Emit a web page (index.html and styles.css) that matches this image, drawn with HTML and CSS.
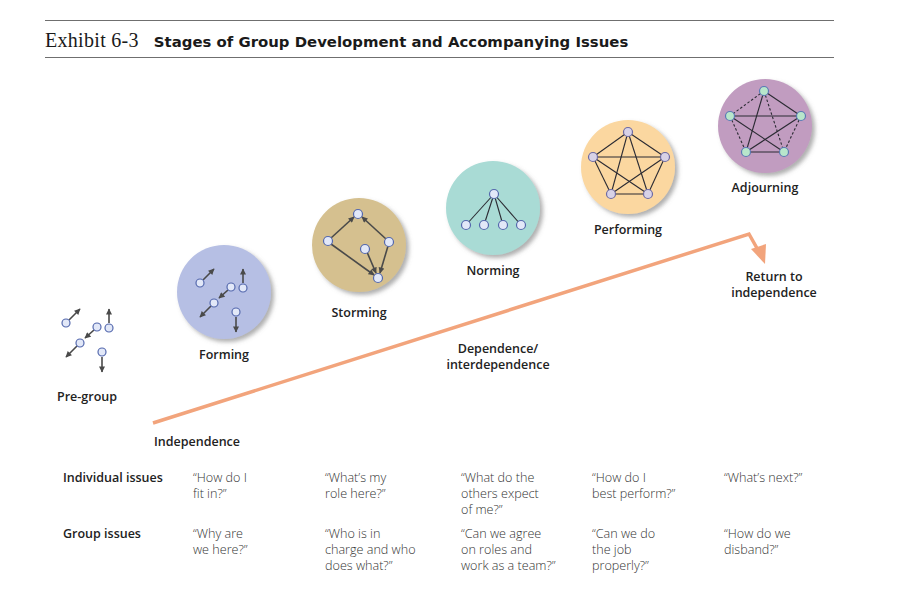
FILE: index.html
```html
<!DOCTYPE html>
<html lang="en">
<head>
<meta charset="utf-8">
<title>Exhibit 6-3 Stages of Group Development</title>
<link rel="stylesheet" href="styles.css">
</head>
<body>
<div class="page">
  <header class="exhibit-head">
    <span class="exhibit-num">Exhibit 6-3</span>
    <span class="exhibit-title">Stages of Group Development and Accompanying Issues</span>
  </header>

  <div class="diagram">
    <svg class="diagram-svg" width="897" height="404" viewBox="0 58 897 404" xmlns="http://www.w3.org/2000/svg">
      <defs>
        <marker id="ah" viewBox="0 0 10 10" refX="9" refY="5" markerWidth="7" markerHeight="6" markerUnits="userSpaceOnUse" orient="auto">
          <path d="M0,0 L10,5 L0,10 z" fill="#4a4a4a"/>
        </marker>
        <filter id="sh" x="-20%" y="-20%" width="150%" height="150%">
          <feDropShadow dx="3" dy="3" stdDeviation="2" flood-color="#6e6e6e" flood-opacity="0.55"/>
        </filter>
        <g id="scatter">
          <line class="arr" x1="69" y1="320" x2="80" y2="309" marker-end="url(#ah)"/>
          <line class="arr" x1="94" y1="330" x2="85" y2="338" marker-end="url(#ah)"/>
          <line class="arr" x1="77" y1="346" x2="66" y2="357" marker-end="url(#ah)"/>
          <line class="arr" x1="109" y1="323" x2="109" y2="309" marker-end="url(#ah)"/>
          <line class="arr" x1="102" y1="357" x2="102" y2="372" marker-end="url(#ah)"/>
          <circle class="nd" cx="66" cy="323" r="4"/>
          <circle class="nd" cx="97" cy="327" r="4"/>
          <circle class="nd" cx="80" cy="343" r="4"/>
          <circle class="nd" cx="109" cy="328" r="4"/>
          <circle class="nd" cx="102" cy="352" r="4"/>
        </g>
      </defs>

      <!-- orange development line -->
      <polyline class="trend" points="153,423 749,234 758,250"/>
      <polygon class="trend-head" points="751,249 766,244 765,264"/>

      <!-- Pre-group -->
      <use href="#scatter" class="pre"/>

      <!-- Forming -->
      <circle class="disc forming" cx="224" cy="292" r="47"/>
      <use href="#scatter" transform="translate(134,-40)"/>

      <!-- Storming -->
      <circle class="disc storming" cx="359" cy="245" r="47"/>
      <line class="arr" x1="331" y1="238" x2="354" y2="217" marker-end="url(#ah)"/>
      <line class="arr" x1="386" y1="239" x2="362" y2="217" marker-end="url(#ah)"/>
      <line class="arr" x1="331" y1="244" x2="374" y2="275" marker-end="url(#ah)"/>
      <line class="arr" x1="367" y1="252" x2="376" y2="273" marker-end="url(#ah)"/>
      <line class="arr" x1="388" y1="246" x2="380" y2="273" marker-end="url(#ah)"/>
      <circle class="nd" cx="358" cy="214" r="4.5"/>
      <circle class="nd" cx="328" cy="241" r="4.5"/>
      <circle class="nd" cx="389" cy="242" r="4.5"/>
      <circle class="nd" cx="365" cy="249" r="4.5"/>
      <circle class="nd" cx="378" cy="278" r="4.5"/>

      <!-- Norming -->
      <circle class="disc norming" cx="493" cy="208" r="47"/>
      <line class="edge" x1="494" y1="194" x2="466" y2="225"/>
      <line class="edge" x1="494" y1="194" x2="484" y2="225"/>
      <line class="edge" x1="494" y1="194" x2="503" y2="225"/>
      <line class="edge" x1="494" y1="194" x2="521" y2="225"/>
      <circle class="nd" cx="494" cy="194" r="4.5"/>
      <circle class="nd" cx="466" cy="225" r="4.5"/>
      <circle class="nd" cx="484" cy="225" r="4.5"/>
      <circle class="nd" cx="503" cy="225" r="4.5"/>
      <circle class="nd" cx="521" cy="225" r="4.5"/>

      <!-- Performing -->
      <circle class="disc performing" cx="628" cy="167" r="47"/>
      <g class="edge">
        <line x1="628" y1="132" x2="593" y2="157"/>
        <line x1="628" y1="132" x2="665" y2="157"/>
        <line x1="628" y1="132" x2="611" y2="194"/>
        <line x1="628" y1="132" x2="648" y2="194"/>
        <line x1="593" y1="157" x2="665" y2="157"/>
        <line x1="593" y1="157" x2="611" y2="194"/>
        <line x1="593" y1="157" x2="648" y2="194"/>
        <line x1="665" y1="157" x2="611" y2="194"/>
        <line x1="665" y1="157" x2="648" y2="194"/>
        <line x1="611" y1="194" x2="648" y2="194"/>
      </g>
      <circle class="nd nd-lav" cx="628" cy="132" r="4.5"/>
      <circle class="nd nd-lav" cx="593" cy="157" r="4.5"/>
      <circle class="nd nd-lav" cx="665" cy="157" r="4.5"/>
      <circle class="nd nd-lav" cx="611" cy="194" r="4.5"/>
      <circle class="nd nd-lav" cx="648" cy="194" r="4.5"/>

      <!-- Adjourning -->
      <circle class="disc adjourning" cx="765" cy="126" r="47"/>
      <g class="edge">
        <line x1="764" y1="91" x2="801" y2="116"/>
        <line x1="764" y1="91" x2="746" y2="152"/>
        <line x1="730" y1="116" x2="801" y2="116"/>
        <line x1="730" y1="116" x2="784" y2="152"/>
        <line x1="801" y1="116" x2="746" y2="152"/>
        <line x1="746" y1="152" x2="784" y2="152"/>
      </g>
      <g class="edge dashed">
        <line x1="764" y1="91" x2="730" y2="116"/>
        <line x1="764" y1="91" x2="784" y2="152"/>
        <line x1="730" y1="116" x2="746" y2="152"/>
        <line x1="801" y1="116" x2="784" y2="152"/>
      </g>
      <circle class="nd nd-green" cx="764" cy="91" r="4.5"/>
      <circle class="nd nd-green" cx="730" cy="116" r="4.5"/>
      <circle class="nd nd-green" cx="801" cy="116" r="4.5"/>
      <circle class="nd nd-green" cx="746" cy="152" r="4.5"/>
      <circle class="nd nd-green" cx="784" cy="152" r="4.5"/>

      <!-- Labels -->
      <text class="lbl" x="87" y="401">Pre-group</text>
      <text class="lbl" x="224" y="359">Forming</text>
      <text class="lbl" x="359" y="317">Storming</text>
      <text class="lbl" x="493" y="275">Norming</text>
      <text class="lbl" x="628" y="234">Performing</text>
      <text class="lbl" x="765" y="192">Adjourning</text>
      <text class="lbl" x="197" y="446">Independence</text>
      <text class="lbl" x="498" y="353">Dependence/</text>
      <text class="lbl" x="498" y="369">interdependence</text>
      <text class="lbl" x="774" y="281">Return to</text>
      <text class="lbl" x="774" y="297">independence</text>
    </svg>
  </div>

  <div class="issues">
    <div class="issue-head">Individual issues</div>
    <div class="quote">“How do I<br>fit in?”</div>
    <div class="quote">“What’s my<br>role here?”</div>
    <div class="quote">“What do the<br>others expect<br>of me?”</div>
    <div class="quote">“How do I<br>best perform?”</div>
    <div class="quote">“What’s next?”</div>

    <div class="issue-head">Group issues</div>
    <div class="quote">“Why are<br>we here?”</div>
    <div class="quote">“Who is in<br>charge and who<br>does what?”</div>
    <div class="quote">“Can we agree<br>on roles and<br>work as a team?”</div>
    <div class="quote">“Can we do<br>the job<br>properly?”</div>
    <div class="quote">“How do we<br>disband?”</div>
  </div>
</div>
</body>
</html>
```

FILE: styles.css
```css
html, body {
  margin: 0;
  padding: 0;
  background: #ffffff;
}

.page {
  width: 897px;
  height: 592px;
  overflow: hidden;
  font-family: "Open Sans", "Liberation Sans", sans-serif;
  color: #222;
}

.exhibit-head {
  margin: 20px 0 0 45px;
  width: 789px;
  height: 38px;
  box-sizing: border-box;
  border-top: 1px solid #6f6f6f;
  border-bottom: 1px solid #6f6f6f;
  display: flex;
  align-items: baseline;
  gap: 15px;
  padding-top: 8px;
}

.exhibit-num {
  font-family: "Liberation Serif", "DejaVu Serif", serif;
  font-size: 20px;
  color: #1a1a1a;
  letter-spacing: 0.3px;
}

.exhibit-title {
  font-family: "DejaVu Sans", "Liberation Sans", sans-serif;
  font-weight: bold;
  font-size: 14.9px;
  color: #1a1a1a;
}

.diagram {
  height: 404px;
}

.diagram-svg {
  display: block;
}

.disc {
  filter: url(#sh);
}
.forming { fill: #b6bfe4; }
.storming { fill: #d5c08f; }
.norming { fill: #a9dbd5; }
.performing { fill: #fbd7a0; }
.adjourning { fill: #c19cc0; }

.nd {
  fill: #e2e8f8;
  stroke: #5468ad;
  stroke-width: 1.2;
}
.pre .nd { fill: #ffffff; }
.nd-lav {
  fill: #d8d2e7;
  stroke: #6d6aa3;
}
.nd-green {
  fill: #b8e6cb;
  stroke: #5a79b5;
}

.arr {
  stroke: #4a4a4a;
  stroke-width: 1.6;
}

.edge, .edge line {
  stroke: #2b2b33;
  stroke-width: 1.1;
}
.dashed line {
  stroke-dasharray: 2.5 2;
}

.trend {
  fill: none;
  stroke: #f2a47c;
  stroke-width: 3.5;
  stroke-linejoin: miter;
}
.trend-head {
  fill: #f2a47c;
}

.lbl {
  font-family: "Open Sans", "Liberation Sans", sans-serif;
  font-weight: 600;
  font-size: 12.5px;
  fill: #222;
  text-anchor: middle;
}

.issues {
  display: grid;
  grid-template-columns: 130px 132px 136px 131px 132px 120px;
  row-gap: 8px;
  padding: 8px 0 0 63px;
}

.issue-head {
  font-weight: 600;
  font-size: 12.5px;
  line-height: 16px;
  color: #222;
}

.quote {
  font-weight: 300;
  font-size: 12.6px;
  line-height: 16px;
  color: #333;
}
```
